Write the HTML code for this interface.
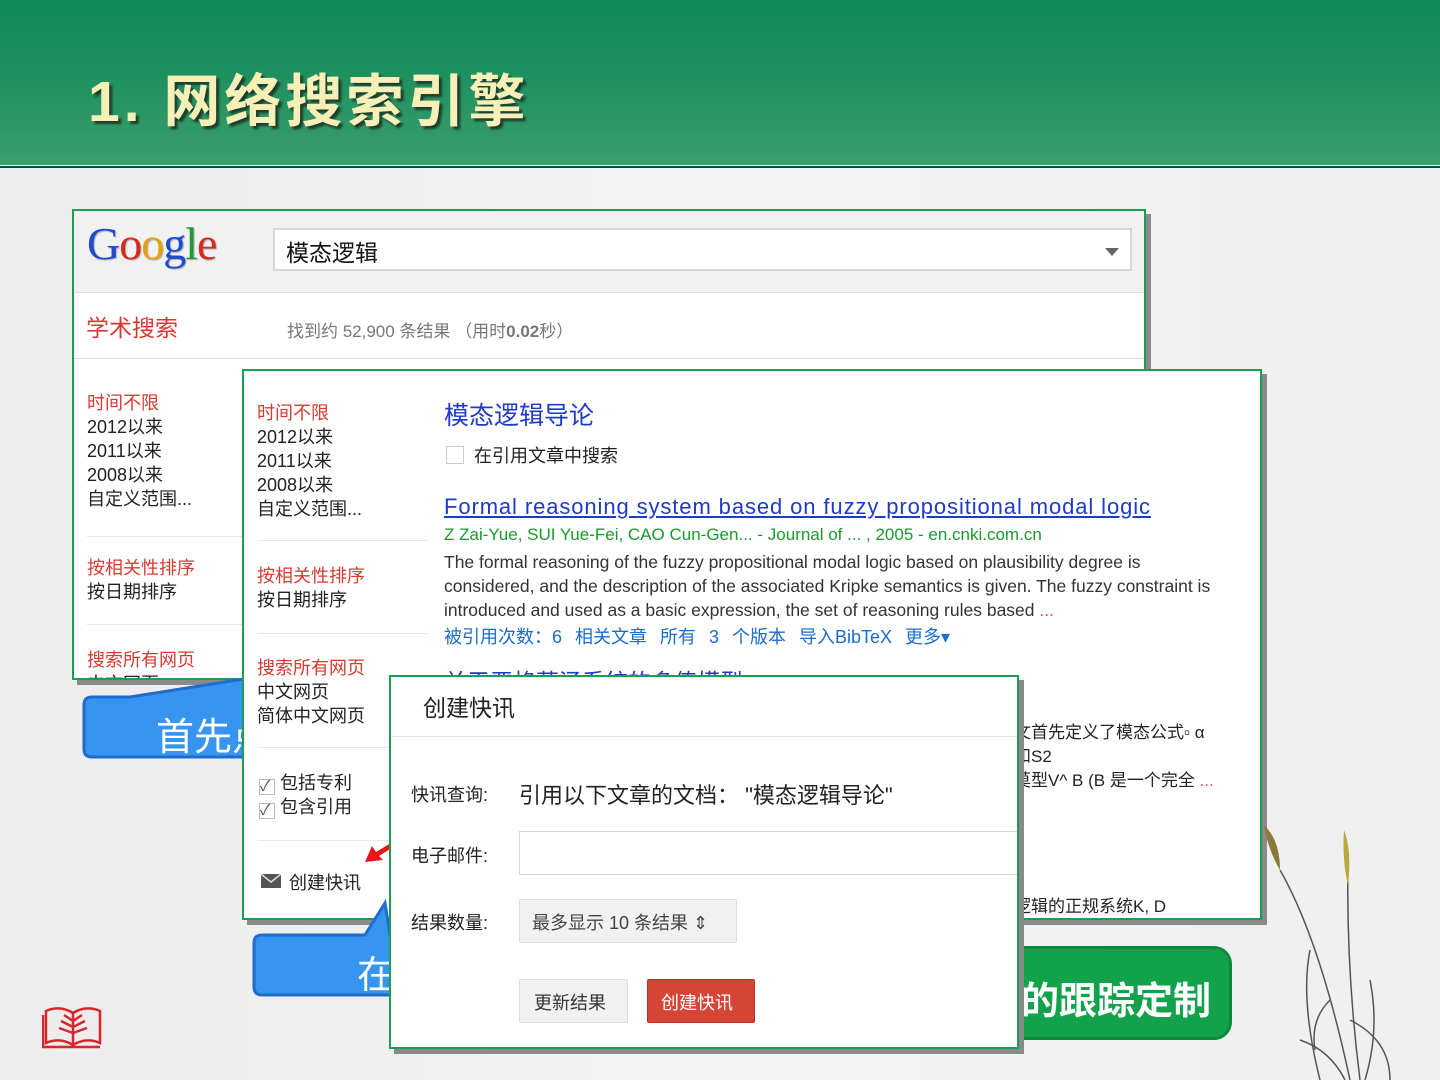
<!DOCTYPE html>
<html><head><meta charset="utf-8"><style>
*{margin:0;padding:0;box-sizing:border-box}
body{width:1440px;height:1080px;overflow:hidden;position:relative;background:linear-gradient(90deg,#ececec,#f4f4f4 50%,#efefef);font-family:"Liberation Sans","Noto Sans CJK SC",sans-serif;}
.a{position:absolute}
.hdr{left:0;top:0;width:1440px;height:165px;background:linear-gradient(180deg,#0e8a5a 0%,#1b8f5f 40%,#3c9e6c 100%);}
.title{left:88px;top:56px;font-size:57px;font-weight:bold;color:#f6f0b8;text-shadow:3px 3px 2px #1d3e2c;letter-spacing:4px;font-family:"Liberation Sans","Noto Sans CJK SC",sans-serif}
.panel{background:#fff;border:2px solid #16a052;box-shadow:5px 5px 0 #8a8a8a;overflow:hidden}
.red{color:#d83a2f}
.blk{color:#222}
.side div{font-size:18px;line-height:24px}
.blue{color:#1d3bc9}
.lnk{color:#1a6ccf}
</style></head><body>
<div class="a hdr"></div>
<div class="a" style="left:0;top:165px;width:1440px;height:1px;background:#fff"></div>
<div class="a" style="left:0;top:166px;width:1440px;height:2px;background:#114a40"></div>
<div class="a title">1.&nbsp;网络搜索引擎</div>

<!-- panel 1 -->
<div class="a panel" style="left:72px;top:209px;width:1074px;height:471px">
  <div class="a" style="left:0;top:0;width:1072px;height:82px;background:#f1f1f1;border-bottom:1px solid #e0e0e0"></div>
  <div class="a" style="left:13px;top:6px;font-family:'Liberation Serif',serif;font-size:46px;letter-spacing:-1px;text-shadow:1px 1px 1px #aaa"><span style="color:#1f4ccf">G</span><span style="color:#d62a1e">o</span><span style="color:#e6a10a">o</span><span style="color:#1f4ccf">g</span><span style="color:#1a9a3a">l</span><span style="color:#d62a1e">e</span></div>
  <div class="a" style="left:199px;top:17px;width:859px;height:43px;background:#fff;border:2px solid #d6d6d6"></div>
  <div class="a" style="left:212px;top:23px;font-size:23px;color:#111">模态逻辑</div>
  <div class="a" style="left:1031px;top:37px;width:0;height:0;border-left:7px solid transparent;border-right:7px solid transparent;border-top:8px solid #666"></div>
  <div class="a red" style="left:12px;top:98px;font-size:23px">学术搜索</div>
  <div class="a" style="left:213px;top:106px;font-size:17px;color:#777">找到约 52,900 条结果 （用时<b>0.02</b>秒）</div>
  <div class="a" style="left:0;top:147px;width:1072px;height:1px;background:#e0e0e0"></div>
  <div class="a side" style="left:13px;top:180px">
    <div class="red">时间不限</div><div class="blk">2012以来</div><div class="blk">2011以来</div><div class="blk">2008以来</div><div class="blk">自定义范围...</div>
  </div>
  <div class="a" style="left:13px;top:325px;width:160px;height:1px;background:#e6e6e6"></div>
  <div class="a side" style="left:13px;top:345px"><div class="red">按相关性排序</div><div class="blk">按日期排序</div></div>
  <div class="a" style="left:13px;top:413px;width:160px;height:1px;background:#e6e6e6"></div>
  <div class="a side" style="left:13px;top:437px"><div class="red">搜索所有网页</div><div class="blk">中文网页</div></div>
</div>

<!-- blue callout 1 -->
<svg class="a" style="left:80px;top:660px" width="200" height="102"><path d="M12 37 L50 37 L170 18 L170 97 L12 97 Q4 97 4 89 L4 45 Q4 37 12 37Z" fill="#3794ef" stroke="#1e6ccc" stroke-width="3"/></svg>
<div class="a" style="left:156px;top:706px;font-size:38px;color:#fff">首先点</div>

<!-- panel 2 -->
<div class="a panel" style="left:242px;top:369px;width:1020px;height:551px">
  <div class="a side" style="left:13px;top:30px">
    <div class="red">时间不限</div><div class="blk">2012以来</div><div class="blk">2011以来</div><div class="blk">2008以来</div><div class="blk">自定义范围...</div>
  </div>
  <div class="a" style="left:13px;top:169px;width:170px;height:1px;background:#e6e6e6"></div>
  <div class="a side" style="left:13px;top:193px"><div class="red">按相关性排序</div><div class="blk">按日期排序</div></div>
  <div class="a" style="left:13px;top:262px;width:170px;height:1px;background:#e6e6e6"></div>
  <div class="a side" style="left:13px;top:285px"><div class="red">搜索所有网页</div><div class="blk">中文网页</div><div class="blk">简体中文网页</div></div>
  <div class="a" style="left:13px;top:376px;width:170px;height:1px;background:#e6e6e6"></div>
  <div class="a side" style="left:15px;top:400px"><div class="blk"><span style="display:inline-block;width:16px;height:16px;border:1px solid #bbb;font-size:15px;line-height:14px;color:#555;vertical-align:-2px">✓</span> 包括专利</div><div class="blk"><span style="display:inline-block;width:16px;height:16px;border:1px solid #bbb;font-size:15px;line-height:14px;color:#555;vertical-align:-2px">✓</span> 包含引用</div></div>
  <div class="a" style="left:13px;top:469px;width:170px;height:1px;background:#e6e6e6"></div>
  <div class="a" style="left:17px;top:503px;width:20px;height:14px;background:#555"></div>
  <svg class="a" style="left:17px;top:503px" width="20" height="14"><path d="M0 0 L10 8 L20 0" stroke="#ddd" stroke-width="1.5" fill="none"/></svg>
  <div class="a blk" style="left:45px;top:498px;font-size:18px">创建快讯</div>
  <div class="a blue" style="left:200px;top:25px;font-size:25px">模态逻辑导论</div>
  <div class="a" style="left:202px;top:75px;width:18px;height:18px;border:1px solid #ccc"></div>
  <div class="a blk" style="left:230px;top:71px;font-size:18px">在引用文章中搜索</div>
  <div class="a blue" style="left:200px;top:123px;font-size:22px;text-decoration:underline;letter-spacing:0.9px;white-space:nowrap">Formal reasoning system based on fuzzy propositional modal logic</div>
  <div class="a" style="left:200px;top:154px;font-size:17px;color:#1a9a2a">Z Zai-Yue, SUI Yue-Fei, CAO Cun-Gen... - Journal of ... , 2005 - en.cnki.com.cn</div>
  <div class="a" style="left:200px;top:179px;font-size:17.5px;color:#333;line-height:24px;width:790px">The formal reasoning of the fuzzy propositional modal logic based on plausibility degree is considered, and the description of the associated Kripke semantics is given. The fuzzy constraint is introduced and used as a basic expression, the set of reasoning rules based <span style="color:#c55">...</span></div>
  <div class="a lnk" style="left:200px;top:252px;font-size:18px;word-spacing:8px">被引用次数：6 相关文章 所有 3 个版本 导入BibTeX 更多▾</div>
  <div class="a blue" style="left:200px;top:292px;font-size:23px;text-decoration:underline">关于严格蕴涵系统的多值模型</div>
  <div class="a blk" style="left:770px;top:350px;font-size:17px;line-height:24px">文首先定义了模态公式▫ α<br>和S2<br>莫型V^ B (B 是一个完全 <span style="color:#c55">...</span></div>
  <div class="a blk" style="left:770px;top:521px;font-size:17px">逻辑的正规系统K, D</div>
</div>

<!-- red arrow -->
<svg class="a" style="left:360px;top:838px" width="40" height="30"><path d="M5 24 L12 8 L16 14 L36 2 L38 6 L19 18 L23 22 Z" fill="#e8141a"/></svg>

<!-- blue callout 2 -->
<svg class="a" style="left:250px;top:898px" width="150" height="102"><path d="M12 37 L115 37 L135 5 L140 37 L148 37 L148 97 L12 97 Q4 97 4 89 L4 45 Q4 37 12 37Z" fill="#3794ef" stroke="#1e6ccc" stroke-width="3"/></svg>
<div class="a" style="left:357px;top:944px;font-size:38px;color:#fff">在</div>

<!-- green callout -->
<div class="a" style="left:995px;top:946px;width:237px;height:94px;background:#12a24b;border:3px solid #0b8a3c;border-radius:18px"></div>
<div class="a" style="left:1021px;top:970px;font-size:38px;color:#fff;font-weight:bold">的跟踪定制</div>

<!-- dialog -->
<div class="a panel" style="left:389px;top:675px;width:630px;height:374px;box-shadow:5px 5px 0 #8a8a8a">
  <div class="a" style="left:32px;top:12px;font-size:23px;color:#222">创建快讯</div>
  <div class="a" style="left:0;top:59px;width:630px;height:1px;background:#e2e2e2"></div>
  <div class="a" style="left:20px;top:104px;font-size:18px;color:#222">快讯查询:</div>
  <div class="a" style="left:128px;top:101px;font-size:22px;color:#222">引用以下文章的文档： "模态逻辑导论"</div>
  <div class="a" style="left:20px;top:165px;font-size:18px;color:#222">电子邮件:</div>
  <div class="a" style="left:128px;top:154px;width:510px;height:44px;border:1px solid #d8d8d8;background:#fff"></div>
  <div class="a" style="left:20px;top:232px;font-size:18px;color:#222">结果数量:</div>
  <div class="a" style="left:128px;top:222px;width:218px;height:44px;border:1px solid #ddd;background:#f1f1f1;border-radius:2px"></div>
  <div class="a" style="left:141px;top:232px;font-size:18px;color:#444">最多显示 10 条结果 ⇕</div>
  <div class="a" style="left:128px;top:302px;width:109px;height:44px;border:1px solid #ddd;background:#f1f1f1;border-radius:2px"></div>
  <div class="a" style="left:143px;top:312px;font-size:18px;color:#333">更新结果</div>
  <div class="a" style="left:256px;top:302px;width:108px;height:44px;background:#d44535;border:1px solid #c03020;border-radius:2px"></div>
  <div class="a" style="left:270px;top:312px;font-size:18px;color:#fff">创建快讯</div>
</div>

<!-- grass -->
<svg class="a" style="left:1250px;top:820px" width="190" height="260">
  <g stroke="#555" stroke-width="1.5" fill="none">
    <path d="M30 50 Q70 120 100 260"/><path d="M98 40 Q96 150 110 260"/>
    <path d="M60 130 Q50 180 70 260"/><path d="M120 160 Q130 210 115 260"/>
    <path d="M80 180 Q60 200 65 230"/><path d="M100 200 Q140 220 140 260"/>
    <path d="M50 220 Q80 230 95 260"/>
  </g>
  <path d="M94 10 Q102 30 98 65 Q92 40 94 10Z" fill="#b9a93c"/>
  <path d="M14 5 Q30 20 30 50 Q18 30 14 5Z" fill="#8a7a3a"/>
</svg>

<!-- logo -->
<svg class="a" style="left:42px;top:1003px" width="62" height="48">
  <g stroke="#d8262a" stroke-width="2.5" fill="none">
    <path d="M4 40 L4 8 Q18 2 31 10 Q44 2 58 8 L58 40 Q44 34 31 42 Q18 34 4 40Z"/>
    <path d="M31 10 L31 42"/>
    <path d="M31 18 L22 12 M31 24 L19 18 M31 30 L17 25 M31 18 L40 12 M31 24 L43 18 M31 30 L45 25"/>
    <path d="M1 12 L1 44 L58 44"/>
  </g>
</svg>
</body></html>
